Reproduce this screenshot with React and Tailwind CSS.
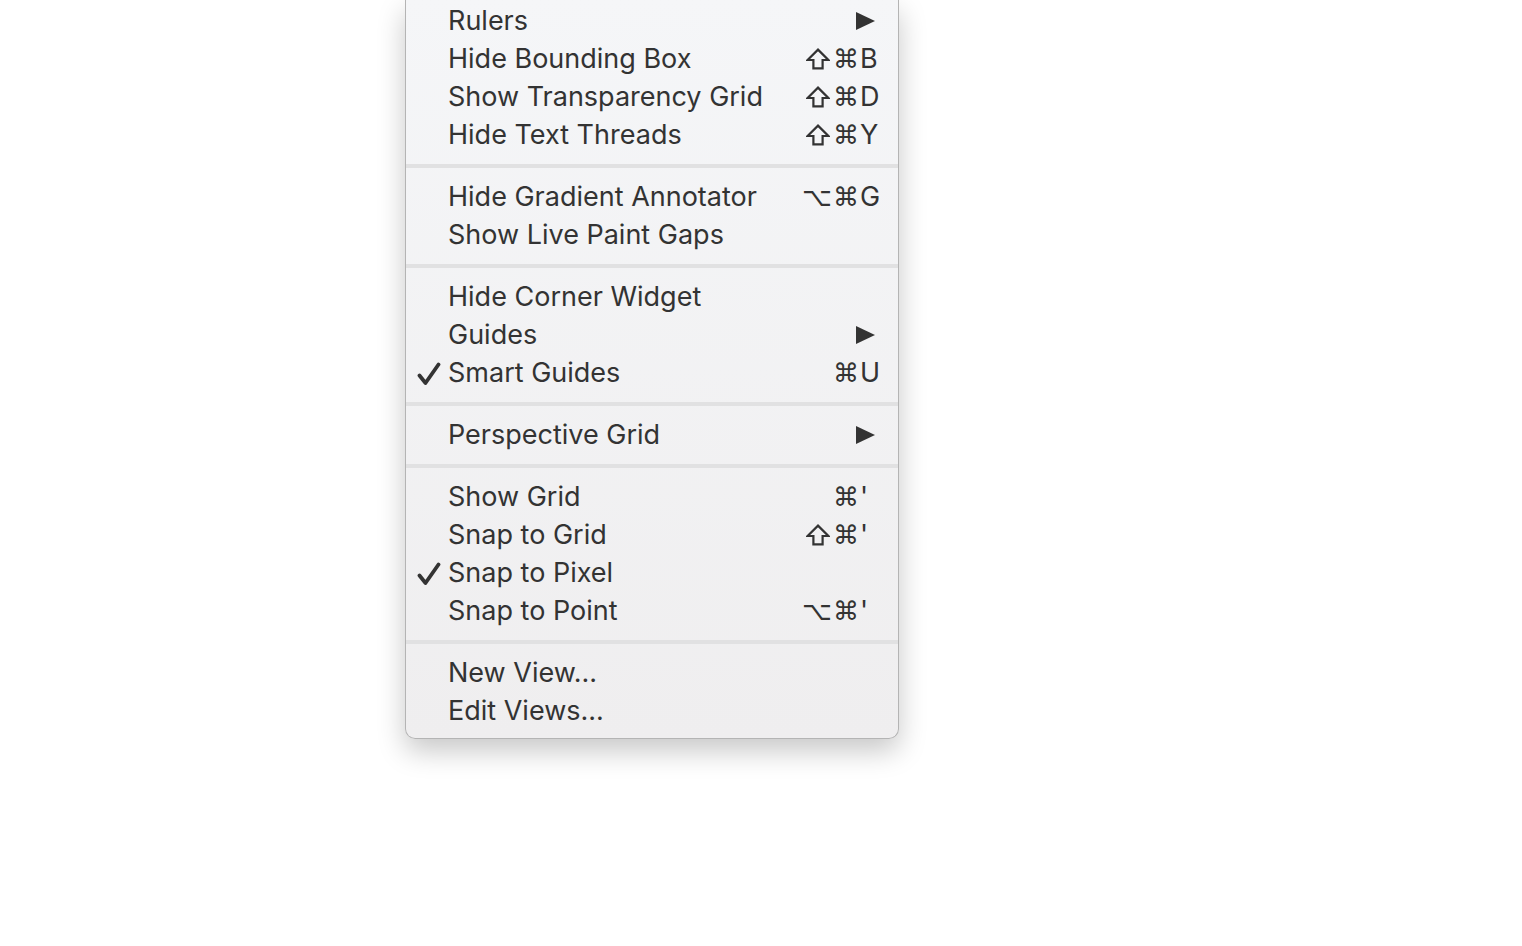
import React from 'react';

const groups = [
  [
    { label: 'Rulers', sub: true },
    { label: 'Hide Bounding Box', shift: true, mods: '⌘', key: 'B' },
    { label: 'Show Transparency Grid', shift: true, mods: '⌘', key: 'D' },
    { label: 'Hide Text Threads', shift: true, mods: '⌘', key: 'Y' },
  ],
  [
    { label: 'Hide Gradient Annotator', mods: '⌥⌘', key: 'G' },
    { label: 'Show Live Paint Gaps' },
  ],
  [
    { label: 'Hide Corner Widget' },
    { label: 'Guides', sub: true },
    { label: 'Smart Guides', checked: true, mods: '⌘', key: 'U' },
  ],
  [{ label: 'Perspective Grid', sub: true }],
  [
    { label: 'Show Grid', mods: '⌘', key: "'" },
    { label: 'Snap to Grid', shift: true, mods: '⌘', key: "'" },
    { label: 'Snap to Pixel', checked: true },
    { label: 'Snap to Point', mods: '⌥⌘', key: "'" },
  ],
  [{ label: 'New View...' }, { label: 'Edit Views...' }],
];

// outlined shift arrow, DejaVu draws ⇧ too thin
const ShiftIcon = () => (
  <svg width="24" height="22" viewBox="0 0 24 22" className="mr-[3px]">
    <path d="M12 1.6 L22.4 12 L16.6 12 L16.6 20.4 L7.4 20.4 L7.4 12 L1.6 12 Z" fill="none" stroke="#333" strokeWidth="2.2" strokeLinejoin="miter" />
  </svg>
);

const MenuRow = ({ item }) => (
  <div className="flex h-[38px] items-center">
    <div className="flex w-[42px] justify-end pr-[6px]">
      {item.checked && (
        <svg width="25" height="24" viewBox="0 0 25 24" className="mt-[1px]">
          <path d="M2.5 13.5 L8.5 21 L21.5 2.5" fill="none" stroke="#333" strokeWidth="3.8" strokeLinecap="round" strokeLinejoin="round" />
        </svg>
      )}
    </div>
    <div className="flex-1 whitespace-nowrap">{item.label}</div>
    <div className="flex items-center pr-[12px]">
      {item.shift && <ShiftIcon />}
      <span className="font-['DejaVu_Sans',sans-serif] text-[26px] tracking-[1px]">{item.mods}</span>
      <span className="flex w-[26px] items-center">
        {item.sub ? (
          <svg width="19" height="18" viewBox="0 0 19 18" className="-ml-[4px]">
            <polygon points="0,0 19,9 0,18" fill="#333" />
          </svg>
        ) : (
          item.key
        )}
      </span>
    </div>
  </div>
);

export default function App() {
  return (
    <div className="min-h-[946px] bg-white pl-[405px] font-['Inter',sans-serif] text-[27px] text-[#333]">
      <div className="w-[494px] rounded-b-[10px] border-x border-b border-[#b4b4b4] bg-gradient-to-b from-[#f5f6f8] to-[#efeeef] pb-[8px] pt-[2px] shadow-[0_12px_28px_rgba(0,0,0,0.22)]">
        {groups.map((group, gi) => (
          <div key={gi}>
            {gi > 0 && (
              <div className="py-[10px]">
                <div className="h-[4px] bg-[#e1e1e2]" />
              </div>
            )}
            {group.map((item) => (
              <MenuRow key={item.label} item={item} />
            ))}
          </div>
        ))}
      </div>
    </div>
  );
}
